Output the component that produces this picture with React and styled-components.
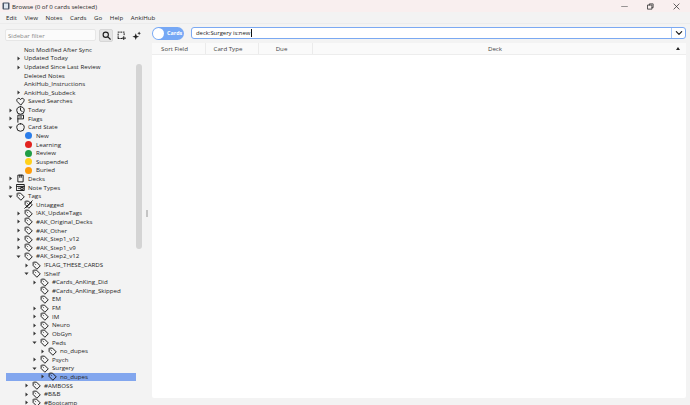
import React from "react"
import styled, { createGlobalStyle } from "styled-components"

const Global = createGlobalStyle`
  html, body {
    margin: 0;
    height: 100%;
    overflow: hidden;
  }
  #root {
    height: 100%;
  }
`

const Window = styled.div`
  width: 690px;
  height: 405px;
  display: flex;
  flex-direction: column;
  overflow: hidden;
  background-color: #f3f3f3;
  color: #1f1f1f;
  font-family: "Open Sans", "Noto Sans", sans-serif;
  font-size: 6.15px;
`

const TitleBar = styled.div`
  height: 12px;
  display: flex;
  align-items: center;
  padding-left: 2px;
  background-color: #f9efef;
  svg {
    flex: none;
  }
`

const TitleText = styled.span`
  margin-left: 2px;
  flex: 1;
`

const WinButton = styled.div`
  width: 26px;
  height: 12px;
  display: flex;
  align-items: center;
  justify-content: center;
  margin-right: ${(p) => p.$gap || 0}px;
`

const MenuBar = styled.div`
  height: 11px;
  display: flex;
  align-items: center;
  gap: 7.6px;
  padding-left: 6px;
  border-bottom: 1px solid #ececec;
`

const Main = styled.div`
  flex: 1;
  min-height: 0;
  display: flex;
`

const Sidebar = styled.div`
  width: 143px;
  flex: none;
  display: flex;
  flex-direction: column;
  position: relative;
`

const SidebarTools = styled.div`
  height: 20.5px;
  flex: none;
  display: flex;
  align-items: center;
  padding: 1px 0 0 5px;
`

const FilterInput = styled.div`
  width: 91px;
  height: 12px;
  box-sizing: border-box;
  display: flex;
  align-items: center;
  padding-left: 2px;
  background-color: #fbfbfb;
  border: 1px solid #e6e6e6;
  border-radius: 2px;
  color: #8a8a8a;
`

const IconButton = styled.div`
  width: 14px;
  height: 13px;
  box-sizing: border-box;
  display: flex;
  align-items: center;
  justify-content: center;
  margin-left: ${(p) => p.$gap}px;
  background-color: ${(p) => (p.$active ? "#e4e4e4" : "transparent")};
  border: 1px solid ${(p) => (p.$active ? "#d6d6d6" : "transparent")};
  border-radius: 2px;
`

const Tree = styled.div`
  flex: 1;
  min-height: 0;
  overflow: hidden;
  margin-left: 6px;
  width: 130px;
`

const Row = styled.div`
  height: 8.62px;
  display: flex;
  align-items: center;
  white-space: nowrap;
  padding-left: ${(p) => p.$depth * 8}px;
  background-color: ${(p) => (p.$selected ? "#82a6ee" : "transparent")};
`

const Arrow = styled.span`
  width: 8px;
  height: 8px;
  flex: none;
  display: flex;
  align-items: center;
  justify-content: center;
`

const IconSlot = styled.span`
  width: 12px;
  height: 8.6px;
  flex: none;
  margin-right: 2px;
  display: flex;
  align-items: center;
  justify-content: center;
`

const Dot = styled.span`
  width: 7px;
  height: 7px;
  border-radius: 50%;
  background-color: ${(p) => p.$color};
`

const Label = styled.span`
  margin-left: ${(p) => (p.$plain ? 2 : 0)}px;
  line-height: 8px;
`

const Thumb = styled.div`
  position: absolute;
  left: 136px;
  top: 40px;
  width: 6px;
  height: 185px;
  border-radius: 3px;
  background-color: #d4d4d4;
`

const Splitter = styled.div`
  width: 9px;
  flex: none;
  display: flex;
  align-items: center;
  justify-content: center;
  padding: 0 2px 2px 0;
  box-sizing: border-box;
  span {
    width: 2px;
    height: 7px;
    background-color: #c4c4c4;
  }
`

const Content = styled.div`
  flex: 1;
  min-width: 0;
  display: flex;
  flex-direction: column;
  padding: 2px 4px 7px 0;
`

const SearchRow = styled.div`
  height: 14px;
  flex: none;
  display: flex;
  align-items: center;
  gap: 7px;
`

const Toggle = styled.div`
  width: 32px;
  height: 13px;
  flex: none;
  box-sizing: border-box;
  display: flex;
  align-items: center;
  gap: 3px;
  padding-left: 1px;
  border-radius: 7px;
  background-color: #76a8f5;
  color: #fff;
  font-size: 5.4px;
  font-weight: 700;
  i {
    width: 11px;
    height: 11px;
    border-radius: 50%;
    background-color: #fff;
  }
`

const SearchBox = styled.div`
  flex: 1;
  height: 12.5px;
  box-sizing: border-box;
  display: flex;
  align-items: stretch;
  background-color: #fff;
  border: 1px solid #7ba9f2;
  border-radius: 3px;
`

const SearchText = styled.div`
  flex: 1;
  display: flex;
  align-items: center;
  padding-left: 4px;
  color: #222;
  font-size: 5.9px;
  i {
    width: 0.6px;
    height: 8px;
    margin-left: 0.5px;
    background-color: #111;
  }
`

const SearchDrop = styled.div`
  width: 13px;
  display: flex;
  align-items: center;
  justify-content: center;
  border-left: 1px solid #a9c8f7;
`

const Table = styled.div`
  flex: 1;
  min-height: 0;
  margin-top: 3px;
  display: flex;
  flex-direction: column;
  background-color: #fff;
  border-radius: 2px;
`

const Header = styled.div`
  height: 11px;
  flex: none;
  display: flex;
  background-color: #fafafa;
  border-bottom: 1px solid #ededed;
`

const Column = styled.div`
  flex: ${(p) => (p.$grow ? 1 : "none")};
  width: ${(p) => (p.$width ? `${p.$width}px` : "auto")};
  box-sizing: border-box;
  position: relative;
  display: flex;
  align-items: center;
  justify-content: center;
  padding-right: 8px;
  border-right: 1px solid ${(p) => (p.$grow ? "transparent" : "#ebebeb")};
  color: #444;
  svg {
    position: absolute;
    right: 5px;
    top: 4px;
  }
`

const Line = ({ d, size = 9, view = 12, width = 1.3, color = "#1c1c1c" }) => (
  <svg width={size} height={size} viewBox={`0 0 ${view} ${view}`} fill="none" stroke={color} strokeWidth={width} strokeLinecap="round" strokeLinejoin="round">
    <path d={d} />
  </svg>
)

const tagPath = "M1.5 2.5 L1.5 6 L6.5 11 L11 6.5 L6 1.5 L2.5 1.5 Z M4 4 L4.4 4.4"

const icons = {
  heart: "M6 10.5 L1.6 6 C0.2 4 1.6 1.7 3.6 1.8 C4.8 1.8 5.6 2.6 6 3.4 C6.4 2.6 7.2 1.8 8.4 1.8 C10.4 1.7 11.8 4 10.4 6 Z",
  clock: "M6 1 A5 5 0 1 0 6 11 A5 5 0 1 0 6 1 Z M6 3.2 L6 6 L8.2 7.2",
  flag: "M2.5 11 L2.5 1.5 L10 1.5 L10 6.5 L2.5 6.5 M5 4 L7.5 4",
  circle: "M6 1 A5 5 0 1 0 6 11 A5 5 0 1 0 6 1 Z",
  deck: "M3 1.5 L9.5 1.5 L9.5 10.5 L3 10.5 Z M5 1.5 L5 4.5 M7 1.5 L7 4.5",
  note: "M1 2 L11 2 L11 10 L1 10 Z M1 4.6 L11 4.6 M3 7 L5.5 7 M6.8 6 L9.5 6 L9.5 8.5 L6.8 8.5 Z",
  tag: tagPath,
  untagged: `${tagPath} M1 11 L11 1 M3 10 L10 3`,
}

const rows = [
  { d: 1, t: "Not Modified After Sync" },
  { d: 1, t: "Updated Today", a: "r" },
  { d: 1, t: "Updated Since Last Review", a: "r" },
  { d: 1, t: "Deleted Notes" },
  { d: 1, t: "AnkiHub_Instructions" },
  { d: 1, t: "AnkiHub_Subdeck", a: "r" },
  { d: 0, t: "Saved Searches", i: "heart" },
  { d: 0, t: "Today", i: "clock", a: "r" },
  { d: 0, t: "Flags", i: "flag", a: "r" },
  { d: 0, t: "Card State", i: "circle", a: "d" },
  { d: 1, t: "New", c: "#2b7de9" },
  { d: 1, t: "Learning", c: "#e2231f" },
  { d: 1, t: "Review", c: "#1f9d45" },
  { d: 1, t: "Suspended", c: "#ffd11a" },
  { d: 1, t: "Buried", c: "#ff9d0a" },
  { d: 0, t: "Decks", i: "deck", a: "r" },
  { d: 0, t: "Note Types", i: "note", a: "r" },
  { d: 0, t: "Tags", i: "tag", a: "d" },
  { d: 1, t: "Untagged", i: "untagged" },
  { d: 1, t: "!AK_UpdateTags", i: "tag", a: "r" },
  { d: 1, t: "#AK_Original_Decks", i: "tag", a: "r" },
  { d: 1, t: "#AK_Other", i: "tag", a: "r" },
  { d: 1, t: "#AK_Step1_v12", i: "tag", a: "r" },
  { d: 1, t: "#AK_Step1_v9", i: "tag", a: "r" },
  { d: 1, t: "#AK_Step2_v12", i: "tag", a: "d" },
  { d: 2, t: "!FLAG_THESE_CARDS", i: "tag", a: "r" },
  { d: 2, t: "!Shelf", i: "tag", a: "d" },
  { d: 3, t: "#Cards_AnKing_Did", i: "tag", a: "r" },
  { d: 3, t: "#Cards_AnKing_Skipped", i: "tag" },
  { d: 3, t: "EM", i: "tag" },
  { d: 3, t: "FM", i: "tag", a: "r" },
  { d: 3, t: "IM", i: "tag", a: "r" },
  { d: 3, t: "Neuro", i: "tag", a: "r" },
  { d: 3, t: "ObGyn", i: "tag", a: "r" },
  { d: 3, t: "Peds", i: "tag", a: "d" },
  { d: 4, t: "no_dupes", i: "tag", a: "r" },
  { d: 3, t: "Psych", i: "tag", a: "r" },
  { d: 3, t: "Surgery", i: "tag", a: "d" },
  { d: 4, t: "no_dupes", i: "tag", a: "r", s: true },
  { d: 2, t: "#AMBOSS", i: "tag", a: "r" },
  { d: 2, t: "#B&B", i: "tag", a: "r" },
  { d: 2, t: "#Bootcamp", i: "tag", a: "r" },
]

const Caret = ({ dir }) => (
  <svg width="5" height="5" viewBox="0 0 6 6" fill="#333">
    <path d={dir === "d" ? "M0.5 1.8 L5.5 1.8 L3 4.8 Z" : "M1.8 0.5 L4.8 3 L1.8 5.5 Z"} />
  </svg>
)

const TreeRow = ({ row }) => (
  <Row $depth={row.d} $selected={row.s}>
    <Arrow>{row.a && <Caret dir={row.a} />}</Arrow>
    {row.i && (
      <IconSlot>
        <Line d={icons[row.i]} />
      </IconSlot>
    )}
    {row.c && (
      <IconSlot>
        <Dot $color={row.c} />
      </IconSlot>
    )}
    <Label $plain={!row.i && !row.c}>{row.t}</Label>
  </Row>
)

const App = () => (
  <Window>
    <Global />
    <TitleBar>
      <svg width="8" height="8" viewBox="0 0 8 8">
        <rect x="0.5" y="0.5" width="7" height="7" rx="1" fill="#4a5568" />
        <rect x="2" y="1.5" width="4" height="5" fill="#dfe6f0" />
      </svg>
      <TitleText>Browse (0 of 0 cards selected)</TitleText>
      <WinButton>
        <Line d="M1 6 L11 6" size={7} color="#777" />
      </WinButton>
      <WinButton>
        <Line d="M1.5 3.5 L8.5 3.5 L8.5 10.5 L1.5 10.5 Z M4 3.5 L4 1.5 L10.5 1.5 L10.5 8 L8.5 8" size={7} color="#333" width={1.4} />
      </WinButton>
      <WinButton $gap={1}>
        <Line d="M1.5 1.5 L10.5 10.5 M10.5 1.5 L1.5 10.5" size={7} color="#333" />
      </WinButton>
    </TitleBar>
    <MenuBar>
      {["Edit", "View", "Notes", "Cards", "Go", "Help", "AnkiHub"].map((m) => (
        <span key={m}>{m}</span>
      ))}
    </MenuBar>
    <Main>
      <Sidebar>
        <SidebarTools>
          <FilterInput>Sidebar filter</FilterInput>
          <IconButton $gap={3} $active>
            <Line d="M5 1.5 A3.5 3.5 0 1 0 5 8.5 A3.5 3.5 0 1 0 5 1.5 Z M7.6 7.6 L11 11" width={1.5} />
          </IconButton>
          <IconButton $gap={1}>
            <Line d="M1.5 1.5 L3 1.5 M5 1.5 L6.5 1.5 M8.5 1.5 L9.5 1.5 M1.5 4 L1.5 5.5 M1.5 7.5 L1.5 9 M9.5 3.5 L9.5 5 M1.5 10 L3 10 M5 10 L6.5 10 M9 7.5 L9 11.5 M7 9.5 L11.5 9.5" />
          </IconButton>
          <IconButton $gap={1}>
            <svg width="9" height="9" viewBox="0 0 12 12" fill="#222">
              <path d="M5 3 L6.2 6.3 L9.5 7.5 L6.2 8.7 L5 12 L3.8 8.7 L0.5 7.5 L3.8 6.3 Z M9.5 0.5 L10.2 2.3 L12 3 L10.2 3.7 L9.5 5.5 L8.8 3.7 L7 3 L8.8 2.3 Z" />
            </svg>
          </IconButton>
        </SidebarTools>
        <Tree>
          {rows.map((row, i) => (
            <TreeRow key={i} row={row} />
          ))}
        </Tree>
        <Thumb />
      </Sidebar>
      <Splitter>
        <span />
      </Splitter>
      <Content>
        <SearchRow>
          <Toggle>
            <i />
            Cards
          </Toggle>
          <SearchBox>
            <SearchText>
              deck:Surgery is:new
              <i />
            </SearchText>
            <SearchDrop>
              <Line d="M2 4 L6 8 L10 4" size={8} width={1.8} />
            </SearchDrop>
          </SearchBox>
        </SearchRow>
        <Table>
          <Header>
            <Column $width={54}>Sort Field</Column>
            <Column $width={53}>Card Type</Column>
            <Column $width={54}>Due</Column>
            <Column $grow>
              Deck
              <svg width="4" height="3" viewBox="0 0 4 3" fill="#222">
                <path d="M2 0 L4 3 L0 3 Z" />
              </svg>
            </Column>
          </Header>
        </Table>
      </Content>
    </Main>
  </Window>
)

export default App
